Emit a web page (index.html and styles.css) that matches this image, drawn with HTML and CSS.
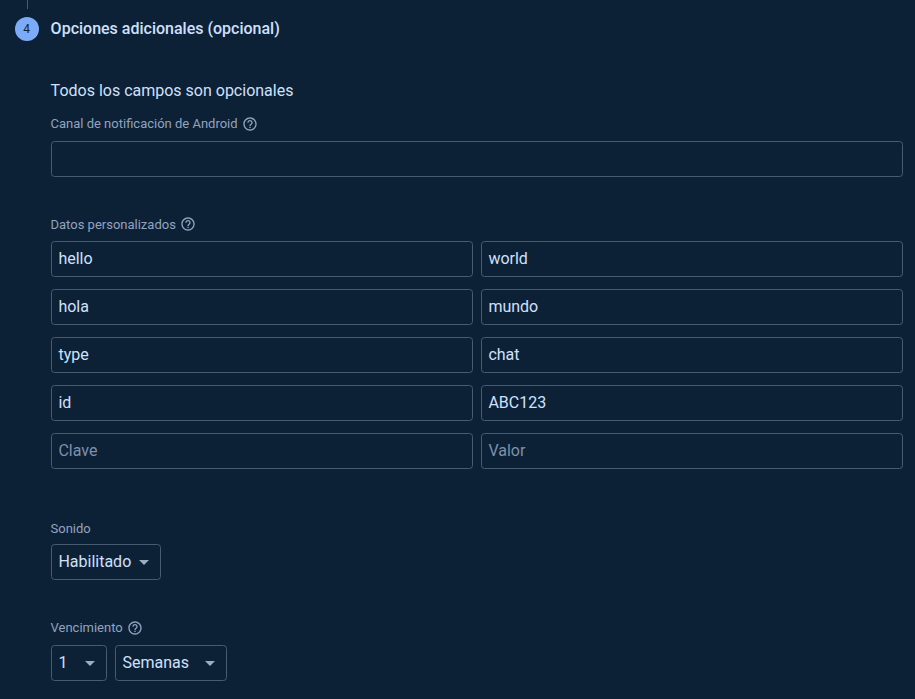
FILE: index.html
```html
<!DOCTYPE html>
<html lang="es">
<head>
<meta charset="utf-8">
<title>Opciones adicionales</title>
<link rel="stylesheet" href="styles.css">
</head>
<body>
<svg class="sprite" width="0" height="0"><symbol id="help" viewBox="0 0 24 24"><path d="M11 18h2v-2h-2v2zm1-16C6.480 2 2 6.480 2 12s4.480 10 10 10 10-4.480 10-10S17.520 2 12 2zm0 18c-4.410 0-8-3.590-8-8s3.590-8 8-8 8 3.590 8 8-3.590 8-8 8zm0-14c-2.210 0-4 1.790-4 4h2c0-1.100.9-2 2-2s2 .9 2 2c0 2-3 1.750-3 5h2c0-2.250 3-2.500 3-5 0-2.210-1.790-4-4-4z"/></symbol></svg>
<div class="line"></div>
<header class="step"><span class="badge">4</span><h2>Opciones adicionales (opcional)</h2></header>
<main class="content">
<p class="intro">Todos los campos son opcionales</p>
<div class="label"><span class="raised">Canal de notificación de Android</span><svg class="help"><use href="#help"/></svg></div>
<div class="field"></div>
<div class="label data-label"><span>Datos personalizados</span><svg class="help"><use href="#help"/></svg></div>
<div class="grid">
<div class="field"><span>hello</span></div><div class="field"><span>world</span></div>
<div class="field"><span>hola</span></div><div class="field"><span>mundo</span></div>
<div class="field"><span>type</span></div><div class="field"><span>chat</span></div>
<div class="field"><span>id</span></div><div class="field"><span>ABC123</span></div>
<div class="field empty"><span>Clave</span></div><div class="field empty"><span>Valor</span></div>
</div>
<div class="label sound-label"><span class="raised">Sonido</span></div>
<div class="field select sound"><span>Habilitado</span><i class="arrow"></i></div>
<div class="label expiry-label"><span class="raised">Vencimiento</span><svg class="help"><use href="#help"/></svg></div>
<div class="row"><div class="field select count"><span>1</span><i class="arrow"></i></div><div class="field select unit"><span>Semanas</span><i class="arrow"></i></div></div>
</main>
</body>
</html>
```
FILE: styles.css
```css
* { box-sizing: border-box; }
body { margin: 0; height: 699px; overflow: hidden; background: #0d2136; color: #d0e0fc; font-family: Roboto, sans-serif; font-size: 16px; }
.sprite { display: block; height: 0; }
.line { width: 1px; height: 9px; margin-left: 27px; background: #485b70; }
.step { display: flex; align-items: center; height: 40px; padding-left: 15px; gap: 12px; }
.badge { width: 24px; height: 24px; border-radius: 50%; background: #7cacf8; color: #0d2136; font-size: 12px; line-height: 24px; text-align: center; text-indent: -1px; }
h2 { margin: 0 0 0 -.4px; font-size: 16px; font-weight: 500; line-height: 24px; }
.content { padding: 30px 12px 0 51px; }
.intro { margin: 0 0 0 -.4px; line-height: 24px; }
.label { display: flex; align-items: center; gap: 4px; height: 16px; margin-top: 13px; margin-bottom: 9px; font-size: 13px; color: #92a3bf; }
.label span { margin-left: -.5px; }
.label .raised { padding-bottom: 2px; }
.help { width: 16px; height: 16px; fill: currentColor; }
.field { display: flex; align-items: center; height: 36px; padding: 0 7px; border: 1px solid #485b70; border-radius: 3.5px; line-height: 24px; }
.field span { margin-left: -.6px; }
.empty { color: #7f90ab; }
.grid { display: grid; grid-template-columns: 1fr 1fr; gap: 12px 8px; }
.data-label { margin-top: 39px; }
.sound-label { margin-top: 52px; margin-bottom: 7px; }
.expiry-label { margin-top: 40px; }
.select { justify-content: space-between; padding-right: 11px; }
.arrow { width: 0; border: 5px solid transparent; border-top-color: #9bacc8; border-bottom: 0; }
.sound { width: 110px; }
.row { display: flex; gap: 8px; }
.count { width: 56px; }
.unit { width: 112px; }
```
